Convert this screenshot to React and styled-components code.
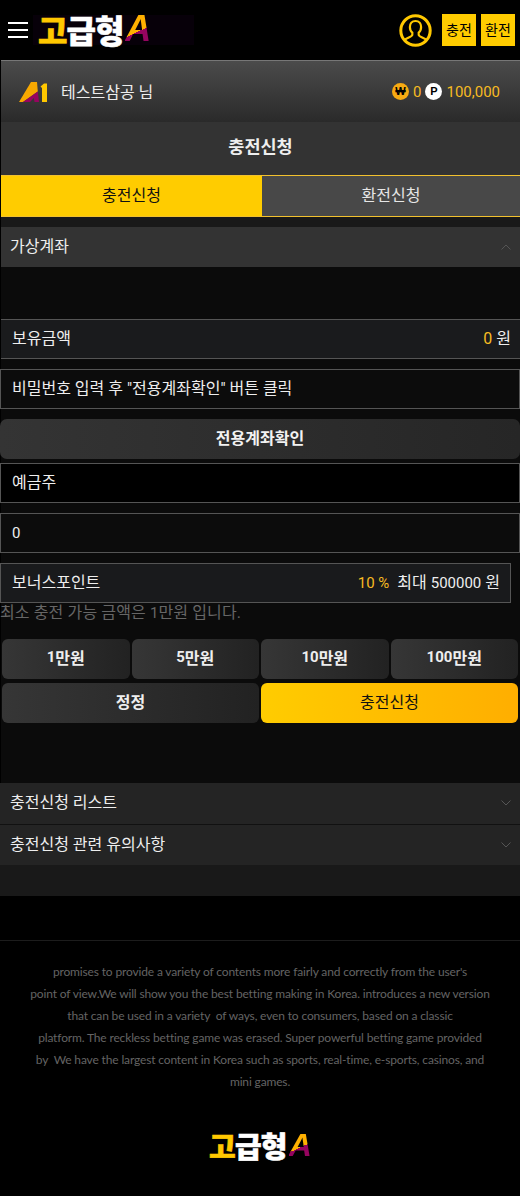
import React from "react";
import styled, { createGlobalStyle } from "styled-components";

const Global = createGlobalStyle`
  html, body { margin: 0; padding: 0; background: #000; }
  body { font-family: Roboto, "Noto Sans CJK KR", sans-serif; color: #fff; }
  * { box-sizing: border-box; }
`;

const Page = styled.div`
  width: 520px;
  height: 1196px;
  overflow: hidden;
  background: #000;
`;
const Header = styled.header`
  height: 61px;
  margin-left: 1px;
  display: flex;
  align-items: center;
  border-bottom: 1px solid #777;
  padding: 0 5px 0 7px;
`;
const Burger = styled.div`
  width: 20px;
  display: flex;
  flex-direction: column;
  gap: 5px;
  margin-right: 5px;
  span { height: 2px; background: #fff; }
`;
const LogoBox = styled.div`
  display: flex;
  align-items: center;
  font-family: "Noto Sans CJK KR", sans-serif;
  font-weight: 900;
  line-height: 1;
  letter-spacing: ${(p) => (p.$small ? "-0.8px" : "-1px")};
  font-size: ${(p) => (p.$small ? "29px" : "32px")};
  -webkit-text-stroke: 0.6px currentColor;
  color: #fff;
  padding: ${(p) => (p.$small ? "0" : "0 44px 2px 5px")};
  background: ${(p) => (p.$small ? "transparent" : "#070009")};
  height: ${(p) => (p.$small ? "auto" : "30px")};
`;
const LogoYellow = styled.span`
  color: #ffc800;
`;
const LogoA = styled.span`
  font-family: "Liberation Sans", sans-serif;
  font-style: italic;
  font-weight: 700;
  font-size: ${(p) => p.$size}px;
  margin-left: 2px;
  -webkit-text-stroke: 0;
  background: linear-gradient(155deg, #ffb000 0 56%, #96045f 56% 100%);
  -webkit-background-clip: text;
  background-clip: text;
  color: transparent;
`;
const HeaderRight = styled.div`
  margin-left: auto;
  display: flex;
  align-items: center;
  gap: 5px;
`;
const HeaderBtn = styled.button`
  width: 34px;
  height: 32px;
  border: 0;
  padding: 0 0 3px;
  background: #ffcc00;
  color: #000;
  font: 400 14px "Noto Sans CJK KR", sans-serif;
`;
const UserBar = styled.div`
  height: 61px;
  margin-left: 1px;
  display: flex;
  align-items: center;
  background: linear-gradient(#4b4b4b, #2a2a2a);
  padding: 0 20px 0 18px;
  font-size: 15px;
`;
const UserName = styled.span`
  margin-left: 14px;
  color: #eee;
  font-size: 16px;
  padding-bottom: 1px;
`;
const Money = styled.div`
  margin-left: auto;
  display: flex;
  align-items: center;
  gap: 4px;
  color: #f7bb22;
  font-size: 15px;
`;
const Coin = styled.span`
  width: 17px;
  height: 17px;
  border-radius: 50%;
  background: ${(p) => p.$bg};
  color: #000;
  font: 700 11px/17px "Liberation Sans", sans-serif;
  text-align: center;
`;
const Main = styled.main`
  margin-left: 1px;
  background: #0b0b0b;
`;
const Title = styled.div`
  height: 53px;
  background: #333;
  display: flex;
  align-items: center;
  justify-content: center;
  padding-bottom: 6px;
  font-size: 17.5px;
  font-weight: 700;
  color: #eee;
`;
const Tabs = styled.div`
  display: grid;
  grid-template-columns: 261px 1fr;
  height: 42px;
`;
const Tab = styled.div`
  display: flex;
  align-items: center;
  justify-content: center;
  padding-bottom: 4px;
  font-size: 16px;
  background: ${(p) => (p.$on ? "#ffcc00" : "#484848")};
  color: ${(p) => (p.$on ? "#111" : "#e6e6e6")};
  border-top: 1px solid #f2c12e;
  border-bottom: 1px solid #f2c12e;
`;
const Gap = styled.div`
  height: ${(p) => p.$h}px;
  background: ${(p) => p.$bg || "transparent"};
`;
const AccHead = styled.div`
  height: ${(p) => p.$h || 40}px;
  margin-left: ${(p) => (p.$flush ? "-1px" : 0)};
  display: flex;
  align-items: center;
  justify-content: space-between;
  padding: 0 9px 5px ${(p) => (p.$flush ? 10 : 9)}px;
  background: ${(p) => p.$bg};
  border-bottom: ${(p) => (p.$line ? "1px solid #111" : "0")};
  font-size: 16px;
  color: #eee;
  svg { transform: translateY(2px); }
`;
const Field = styled.div`
  height: 40px;
  display: flex;
  align-items: center;
  padding: 0 ${(p) => p.$pr ?? 11}px ${(p) => p.$lift ?? 5}px 11px;
  border: 1px solid #555;
  background: ${(p) => p.$bg || "#0c0c0c"};
  font-size: 16px;
  color: #eee;
  margin: ${(p) => p.$m || 0};
  margin-left: ${(p) => (p.$flush ? "-1px" : 0)};
  width: ${(p) => p.$w || "auto"};
`;
const Balance = styled(Field)`
  justify-content: space-between;
  padding-right: 9px;
  background: #1a1b1d;
  border-width: 1px 0;
`;
const Gold = styled.span`
  color: #f7bb22;
`;
const Num = styled.span`
  font-size: 15px;
`;
const BonusValue = styled.span`
  margin-left: auto;
`;
const WideBtn = styled.div`
  height: 40px;
  margin: 10px 0 4px -1px;
  border-radius: 7px;
  background: linear-gradient(90deg, #343434, #262626);
  display: flex;
  align-items: center;
  justify-content: center;
  padding-bottom: 4px;
  font-size: 16px;
  font-weight: 700;
  color: #f2f2f2;
`;
const Hint = styled.div`
  height: 22px;
  margin-left: -1px;
  font-size: 16px;
  line-height: 20px;
  letter-spacing: 0.12px;
  color: #666;
`;
const BtnGrid = styled.div`
  display: grid;
  grid-template-columns: repeat(${(p) => p.$n}, 1fr);
  gap: 2px;
  margin: ${(p) => p.$m};
`;
const Amount = styled.div`
  height: 40px;
  border-radius: 6px;
  display: flex;
  align-items: center;
  justify-content: center;
  padding-bottom: 4px;
  font-size: 16px;
  font-weight: ${(p) => (p.$normal ? 400 : 700)};
  color: ${(p) => (p.$primary ? "#111" : "#eee")};
  background: ${(p) =>
    p.$primary
      ? "linear-gradient(90deg, #ffcc00, #ffae00)"
      : "linear-gradient(90deg, #363636, #222)"};
`;
const Tail = styled.div`
  height: 31px;
  margin-left: -1px;
  background: #191919;
`;
const Footer = styled.footer`
  margin-top: 44px;
  border-top: 1px solid #1c1c1c;
  padding-top: 20px;
  display: flex;
  flex-direction: column;
  align-items: center;
`;
const FooterText = styled.p`
  margin: 0;
  width: 510px;
  font: 400 12px/22px Lato, sans-serif;
  letter-spacing: -0.15px;
  text-align: center;
  color: #646464;
`;
const FooterLogo = styled.div`
  margin-top: 36px;
`;

const UserIcon = () => (
  <svg width="33" height="33" viewBox="0 0 33 33" style={{ marginRight: 5 }}>
    <circle cx="16.5" cy="16.5" r="14.7" fill="none" stroke="#ffc800" strokeWidth="3" />
    <path
      d="M5.5 26c2-2.5 7.8-3 7.8-5.2v-2.2c-1.4-1.1-2.4-3.2-2.4-5.6 0-3.4 2-6 5.6-6s5.6 2.6 5.6 6c0 2.4-1 4.5-2.4 5.6v2.2c0 2.2 5.800 2.700 7.800 5.200"
      fill="none"
      stroke="#ffc800"
      strokeWidth="2.200"
    />
  </svg>
);

const A1Mark = () => (
  <svg width="28" height="20" viewBox="0 0 28 20">
    <path d="M0 20 12 0h6l.8 9.500L4 20z" fill="#f7a800" />
    <path d="M4 20 18.800 9.500 20 20h-4.500l-.7-4-3.800 4z" fill="#96045f" />
    <path d="M21.500 4.500 25 1.500h3V20h-5V6z" fill="#ffc800" />
  </svg>
);

const Chevron = ({ up }) => (
  <svg width="10" height="6" viewBox="0 0 10 6">
    <path d={up ? "M.5 5.500 5 1l4.500 4.500" : "M.5.5 5 5 9.500.5"} fill="none" stroke="#555" strokeWidth="1" />
  </svg>
);

const Logo = ({ small }) => (
  <LogoBox $small={small}>
    <LogoYellow>고</LogoYellow>급형
    <LogoA $size={small ? 32 : 36}>A</LogoA>
  </LogoBox>
);

export default function App() {
  return (
    <Page>
      <Global />
      <Header>
        <Burger><span /><span /><span /></Burger>
        <Logo />
        <HeaderRight>
          <UserIcon />
          <HeaderBtn>충전</HeaderBtn>
          <HeaderBtn>환전</HeaderBtn>
        </HeaderRight>
      </Header>
      <UserBar>
        <A1Mark />
        <UserName>테스트삼공 님</UserName>
        <Money>
          <Coin $bg="#f7ab12">₩</Coin>
          <span>0</span>
          <Coin $bg="#fff">P</Coin>
          <span>100,000</span>
        </Money>
      </UserBar>
      <Main>
        <Title>충전신청</Title>
        <Tabs>
          <Tab $on>충전신청</Tab>
          <Tab>환전신청</Tab>
        </Tabs>
        <Gap $h={10} $bg="#191919" />
        <AccHead $bg="#333">
          가상계좌
          <Chevron up />
        </AccHead>
        <Gap $h={52} />
        <Balance>
          보유금액
          <span><Gold>0</Gold> 원</span>
        </Balance>
        <Field $m="10px 0 0" $flush>비밀번호 입력 후 "전용계좌확인" 버튼 클릭</Field>
        <WideBtn>전용계좌확인</WideBtn>
        <Field $bg="#000" $flush>예금주</Field>
        <Field $m="10px 0" $flush $lift={0}><Num>0</Num></Field>
        <Field $bg="#191a1c" $w="511px" $flush $pr={10}>
          보너스포인트
          <BonusValue>
            <Gold><Num>10 %</Num></Gold>&nbsp; 최대 <Num>500000</Num> 원
          </BonusValue>
        </Field>
        <Hint>최소 충전 가능 금액은 <Num>1</Num>만원 입니다.</Hint>
        <BtnGrid $n={4} $m="14px 2px 4px 1px">
          <Amount><Num>1</Num>만원</Amount>
          <Amount><Num>5</Num>만원</Amount>
          <Amount><Num>10</Num>만원</Amount>
          <Amount><Num>100</Num>만원</Amount>
        </BtnGrid>
        <BtnGrid $n={2} $m="0 2px 60px 1px">
          <Amount>정정</Amount>
          <Amount $primary $normal>충전신청</Amount>
        </BtnGrid>
        <AccHead $h={42} $bg="#242424" $line $flush>
          충전신청 리스트
          <Chevron />
        </AccHead>
        <AccHead $h={40} $bg="#242424" $flush>
          충전신청 관련 유의사항
          <Chevron />
        </AccHead>
        <Tail />
      </Main>
      <Footer>
        <FooterText>
          promises to provide a variety of contents more fairly and correctly from the user's
          <br />
          point of view.We will show you the best betting making in Korea. introduces a new version
          <br />
          that can be used in a variety&nbsp; of ways, even to consumers, based on a classic
          <br />
          platform. The reckless betting game was erased. Super powerful betting game provided
          <br />
          by&nbsp; We have the largest content in Korea such as sports, real-time, e-sports, casinos, and
          <br />
          mini games.
        </FooterText>
        <FooterLogo><Logo small /></FooterLogo>
      </Footer>
    </Page>
  );
}
